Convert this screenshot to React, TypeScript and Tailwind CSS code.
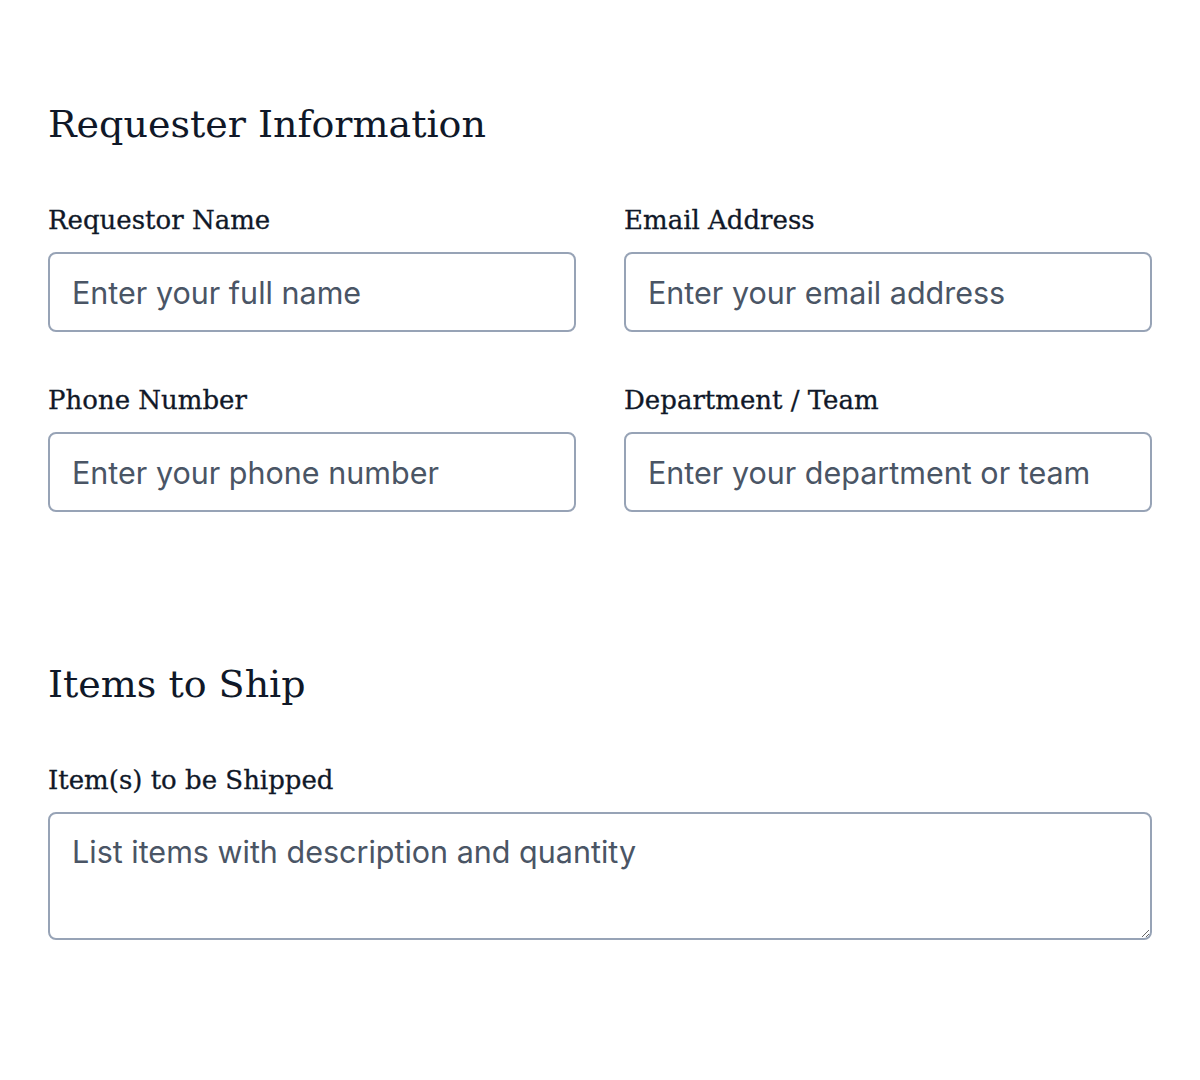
import React from "react";

function Field({ label, placeholder }: { label: string; placeholder: string }) {
  return (
    <div className="flex flex-col">
      <label className="text-[26px] leading-[32px] text-[#101828] mb-[16px] font-['DejaVu_Serif',serif] [-webkit-text-stroke:0.3px_#101828]">{label}</label>
      <input
        placeholder={placeholder}
        className="h-[80px] w-full rounded-[8px] border-2 border-[#97a3b6] px-[22px] text-[30.5px] text-[#101828] placeholder:text-[#4a5565] font-['Inter',sans-serif] outline-none"
      />
    </div>
  );
}

export default function App() {
  return (
    <div className="min-h-[1080px] bg-white px-[48px] pt-[100px]">
      <h2 className="text-[38px] leading-[48px] text-[#101828] font-['DejaVu_Serif',serif]">Requester Information</h2>
      <div className="mt-[56px] grid grid-cols-2 gap-x-[48px] gap-y-[52px]">
        <Field label="Requestor Name" placeholder="Enter your full name" />
        <Field label="Email Address" placeholder="Enter your email address" />
        <Field label="Phone Number" placeholder="Enter your phone number" />
        <Field label="Department / Team" placeholder="Enter your department or team" />
      </div>
      <h2 className="mt-[148px] text-[38px] leading-[48px] text-[#101828] font-['DejaVu_Serif',serif]">Items to Ship</h2>
      <div className="mt-[56px] flex flex-col">
        <label className="text-[26px] leading-[32px] text-[#101828] mb-[16px] font-['DejaVu_Serif',serif] [-webkit-text-stroke:0.3px_#101828]">Item(s) to be Shipped</label>
        <textarea
          placeholder="List items with description and quantity"
          className="h-[128px] w-full rounded-[8px] border-2 border-[#97a3b6] px-[22px] py-[18px] text-[30.5px] leading-[40px] text-[#101828] placeholder:text-[#4a5565] font-['Inter',sans-serif] outline-none"
        />
      </div>
    </div>
  );
}
